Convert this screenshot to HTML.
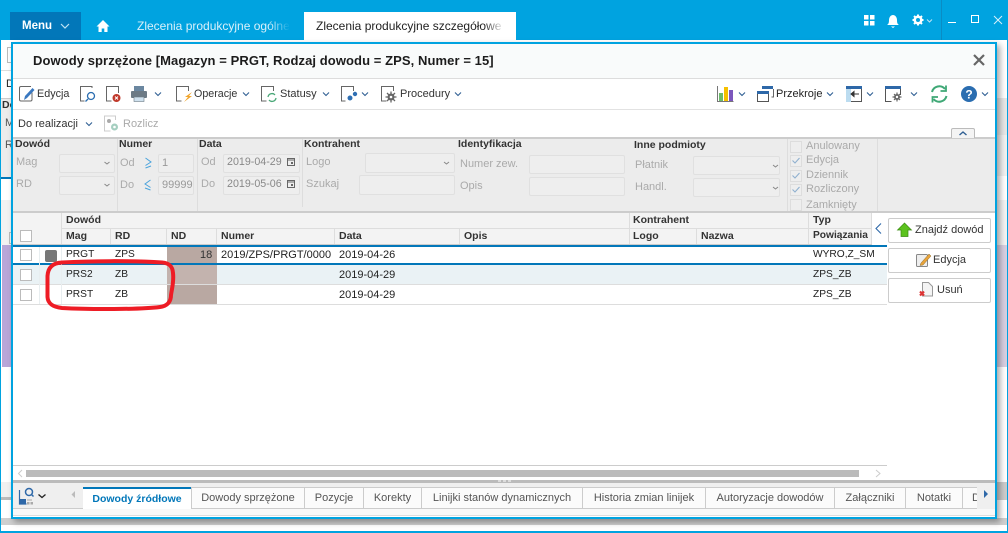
<!DOCTYPE html>
<html><head><meta charset="utf-8">
<style>
html,body{margin:0;padding:0;width:1008px;height:533px;overflow:hidden;background:#fff;font-family:"Liberation Sans",sans-serif;font-size:11px;color:#222}
div,span.a{position:absolute;box-sizing:border-box}
.t{position:absolute;white-space:nowrap;line-height:14px;height:14px}
.b{font-weight:bold;color:#333;font-size:10.5px}
.g{color:#aaa}
.c{font-size:10.2px}
.in{position:absolute;background:#eee;border:1px solid #e0e0e0;border-radius:2px}
.cb{position:absolute;width:12px;height:12px;background:#fff;border:1px solid #bbb}
.cbd{position:absolute;width:12px;height:12px;background:#eee;border:1px solid #ddd}
.btn{position:absolute;left:888px;width:103px;height:25px;background:#fff;border:1px solid #ccc;border-radius:2px}
.tab{position:absolute;top:487px;height:22px;background:#fbfbfb;border:1px solid #ccc;border-bottom:1px solid #ccc;color:#555;line-height:20px;text-align:center;white-space:nowrap;overflow:hidden}
svg{position:absolute;left:0;top:0}
</style></head><body>
<!-- app background -->
<div style="left:0;top:0;width:1008px;height:40px;background:#00a3e0"></div>
<div style="left:10px;top:12px;width:71px;height:28px;background:#0277b9"></div>
<div class="t" style="left:22px;top:19px;color:#fff;font-weight:bold;font-size:11.5px">Menu</div>
<div class="t" style="left:137px;top:19px;color:#d8f0fa;font-size:12px;width:152px;overflow:hidden">Zlecenia produkcyjne ogólne</div>
<div style="left:269px;top:14px;width:21px;height:22px;background:linear-gradient(90deg,rgba(0,163,224,0),#00a3e0)"></div>
<div style="left:304px;top:12px;width:212px;height:28px;background:#fff"></div>
<div class="t" style="left:316px;top:19px;color:#222;font-size:12px;width:188px;overflow:hidden">Zlecenia produkcyjne szczegółowe</div>
<div style="left:484px;top:14px;width:20px;height:22px;background:linear-gradient(90deg,rgba(255,255,255,0),#fff)"></div>
<div style="left:941px;top:0;width:1px;height:40px;background:#0a8cc4"></div>
<!-- background behind modal -->
<div style="left:0;top:40px;width:1008px;height:493px;background:#fff;border-left:1px solid #00a3e0;border-right:1px solid #00a3e0;border-bottom:2px solid #00a3e0"></div>
<div style="left:7px;top:47px;width:5px;height:16px;border:1px solid #bbb;border-right:0"></div>
<div style="left:1px;top:70px;width:11px;height:1px;background:#ddd"></div>
<div style="left:1px;top:98px;width:11px;height:79px;background:#ececec;border-top:1px solid #ccc"></div>
<div class="t" style="left:6px;top:77px;width:6px;overflow:hidden">D</div>
<div class="t b" style="left:2px;top:98px;width:10px;overflow:hidden">De</div>
<div class="t" style="left:5px;top:116px;color:#555;width:7px;overflow:hidden">M</div>
<div class="t" style="left:5px;top:138px;color:#555;width:7px;overflow:hidden">R</div>
<div style="left:1px;top:177px;width:11px;height:2px;background:#0277b9"></div>
<div style="left:1px;top:200px;width:11px;height:45px;background:#f2f2f2"></div>
<div style="left:9px;top:232px;width:3px;height:12px;border:1px solid #bbb;border-right:0"></div>
<div style="left:2px;top:245px;width:10px;height:122px;background:#b8a6d8"></div>
<div style="left:1px;top:482px;width:11px;height:15px;background:#f0f0f0"></div>
<div style="left:1px;top:497px;width:11px;height:3px;background:#bbb"></div>
<div style="left:997px;top:245px;width:10px;height:122px;background:#d8cfe2"></div>
<div style="left:997px;top:98px;width:10px;height:37px;background:#e8e8e8"></div>
<div style="left:997px;top:135px;width:10px;height:41px;background:#f2f2f2"></div>
<div style="left:997px;top:200px;width:10px;height:45px;background:#f4f4f4"></div>
<div style="left:997px;top:482px;width:10px;height:18px;background:#ccc"></div>
<div style="left:1px;top:518px;width:1006px;height:7px;background:#cfcfcf"></div>
<!-- modal -->
<div style="left:11px;top:42px;width:986px;height:477px;background:#fff;border:2px solid #00a3e0;box-shadow:3px 3px 6px rgba(0,0,0,.35)"></div>
<div style="left:13px;top:44px;width:982px;height:35px;background:#f9fbfb;border-bottom:1px solid #ddd"></div>
<div class="t" style="left:33px;top:54px;font-weight:bold;font-size:13px;color:#1c1c1c;letter-spacing:.08px">Dowody sprzężone [Magazyn = PRGT, Rodzaj dowodu = ZPS, Numer = 15]</div>
<div style="left:13px;top:109px;width:982px;height:1px;background:#e2e2e2"></div>
<!-- toolbar -->
<div class="t" style="left:37px;top:87px;color:#333;font-size:10.8px">Edycja</div>
<div class="t" style="left:194px;top:87px;color:#333;font-size:10.7px">Operacje</div>
<div class="t" style="left:280px;top:87px;color:#333">Statusy</div>
<div class="t" style="left:400px;top:87px;color:#333">Procedury</div>
<div class="t" style="left:776px;top:87px;color:#222">Przekroje</div>
<div class="t" style="left:18px;top:117px;color:#333">Do realizacji</div>
<div class="t" style="left:123px;top:117px;color:#aaa">Rozlicz</div>
<!-- filter panel -->
<div style="left:13px;top:137px;width:982px;height:76px;background:#ececec;border-top:2px solid #ccc;border-bottom:2px solid #ccc"></div>
<div style="left:951px;top:128px;width:24px;height:10px;background:#f4f4f4;border:1px solid #bbb;border-bottom:0;border-radius:2px 2px 0 0"></div>
<div style="left:117px;top:139px;width:1px;height:72px;background:#ddd"></div>
<div style="left:197px;top:139px;width:1px;height:72px;background:#ddd"></div>
<div style="left:302px;top:139px;width:1px;height:68px;background:#ddd"></div>
<div style="left:787px;top:139px;width:1px;height:72px;background:#ddd"></div>
<div style="left:877px;top:139px;width:1px;height:72px;background:#ddd"></div>
<div class="t b" style="left:15px;top:137px">Dowód</div>
<div class="t b" style="left:119px;top:137px">Numer</div>
<div class="t b" style="left:199px;top:137px">Data</div>
<div class="t b" style="left:304px;top:137px">Kontrahent</div>
<div class="t b" style="left:458px;top:137px">Identyfikacja</div>
<div class="t b" style="left:634px;top:138px">Inne podmioty</div>
<div class="t g" style="left:16px;top:155px">Mag</div>
<div class="t g" style="left:16px;top:177px">RD</div>
<div class="in" style="left:59px;top:154px;width:56px;height:19px"></div>
<div class="in" style="left:59px;top:176px;width:56px;height:19px"></div>
<div class="t g" style="left:120px;top:156px">Od</div>
<div class="t g" style="left:120px;top:178px">Do</div>
<div class="in" style="left:158px;top:154px;width:36px;height:19px"></div>
<div class="in" style="left:158px;top:176px;width:36px;height:19px"></div>
<div class="t g" style="left:162px;top:156px;color:#999">1</div>
<div class="t g" style="left:162px;top:178px;color:#999;width:31px;overflow:hidden">99999</div>
<div class="t g" style="left:201px;top:155px">Od</div>
<div class="t g" style="left:201px;top:177px">Do</div>
<div class="in" style="left:223px;top:154px;width:77px;height:19px"></div>
<div class="in" style="left:223px;top:176px;width:77px;height:19px"></div>
<div class="t" style="left:227px;top:155px;color:#888;font-size:10.7px">2019-04-29</div>
<div class="t" style="left:227px;top:177px;color:#888;font-size:10.7px">2019-05-06</div>
<div class="t g" style="left:306px;top:155px">Logo</div>
<div class="t g" style="left:306px;top:177px">Szukaj</div>
<div class="in" style="left:365px;top:153px;width:90px;height:20px"></div>
<div class="in" style="left:359px;top:175px;width:96px;height:20px"></div>
<div class="t g" style="left:460px;top:157px">Numer zew.</div>
<div class="t g" style="left:460px;top:179px">Opis</div>
<div class="in" style="left:529px;top:155px;width:96px;height:19px"></div>
<div class="in" style="left:529px;top:177px;width:96px;height:19px"></div>
<div class="t g" style="left:635px;top:158px">Płatnik</div>
<div class="t g" style="left:635px;top:180px">Handl.</div>
<div class="in" style="left:693px;top:156px;width:87px;height:19px"></div>
<div class="in" style="left:693px;top:178px;width:87px;height:19px"></div>
<div class="cbd" style="left:790px;top:141px"></div>
<div class="cbd" style="left:790px;top:155px"></div>
<div class="cbd" style="left:790px;top:170px"></div>
<div class="cbd" style="left:790px;top:184px"></div>
<div class="cbd" style="left:790px;top:199px"></div>
<div class="t g" style="left:806px;top:139px">Anulowany</div>
<div class="t g" style="left:806px;top:153px">Edycja</div>
<div class="t g" style="left:806px;top:168px">Dziennik</div>
<div class="t g" style="left:806px;top:182px">Rozliczony</div>
<div class="t g" style="left:806px;top:198px">Zamknięty</div>
<!-- grid header -->
<div style="left:13px;top:213px;width:859px;height:31px;background:#f3f3f3"></div>
<div style="left:61px;top:228px;width:811px;height:1px;background:#ddd"></div>
<div style="left:13px;top:244px;width:859px;height:1px;background:#ccc"></div>
<div style="left:61px;top:213px;width:1px;height:31px;background:#ddd"></div>
<div style="left:110px;top:229px;width:1px;height:15px;background:#ddd"></div>
<div style="left:166px;top:229px;width:1px;height:15px;background:#ddd"></div>
<div style="left:216px;top:229px;width:1px;height:15px;background:#ddd"></div>
<div style="left:334px;top:229px;width:1px;height:15px;background:#ddd"></div>
<div style="left:459px;top:229px;width:1px;height:15px;background:#ddd"></div>
<div style="left:629px;top:213px;width:1px;height:31px;background:#ddd"></div>
<div style="left:696px;top:229px;width:1px;height:15px;background:#ddd"></div>
<div style="left:808px;top:213px;width:1px;height:31px;background:#ddd"></div>
<div style="left:871px;top:213px;width:1px;height:31px;background:#ddd"></div>
<div class="t b" style="left:66px;top:213px">Dowód</div>
<div class="t b" style="left:633px;top:213px">Kontrahent</div>
<div class="t b" style="left:813px;top:213px">Typ</div>
<div class="t b" style="left:66px;top:229px">Mag</div>
<div class="t b" style="left:115px;top:229px">RD</div>
<div class="t b" style="left:171px;top:229px">ND</div>
<div class="t b" style="left:221px;top:229px">Numer</div>
<div class="t b" style="left:339px;top:229px">Data</div>
<div class="t b" style="left:464px;top:229px">Opis</div>
<div class="t b" style="left:633px;top:229px">Logo</div>
<div class="t b" style="left:701px;top:229px">Nazwa</div>
<div class="t b" style="left:813px;top:229px;font-size:10.2px">Powiązania</div>
<div class="cb" style="left:20px;top:230px"></div>
<!-- grid rows -->
<div style="left:13px;top:264px;width:874px;height:21px;background:#eaf2f5;border-bottom:1px solid #ddd"></div>
<div style="left:13px;top:285px;width:874px;height:20px;background:#fff;border-bottom:1px solid #ddd"></div>
<div style="left:167px;top:246px;width:50px;height:17px;background:#b9a8a2"></div>
<div style="left:167px;top:265px;width:50px;height:19px;background:#c3b3ae"></div>
<div style="left:167px;top:285px;width:50px;height:19px;background:#b9a8a2"></div>
<div style="left:13px;top:245px;width:874px;height:2px;background:#0277b9"></div>
<div style="left:13px;top:263px;width:874px;height:2px;background:#0277b9"></div>
<div style="left:39px;top:247px;width:1px;height:57px;background:#e8eef0"></div>
<div style="left:61px;top:247px;width:1px;height:57px;background:#e8eef0"></div>
<div class="cb" style="left:20px;top:249px"></div>
<div class="cb" style="left:20px;top:269px"></div>
<div class="cb" style="left:20px;top:289px"></div>
<div style="left:45px;top:250px;width:12px;height:12px;background:#777;border-radius:2px"></div>
<div class="t c" style="left:66px;top:248px">PRGT</div>
<div class="t c" style="left:115px;top:248px">ZPS</div>
<div class="t" style="left:200px;top:248px;color:#333">18</div>
<div class="t" style="left:221px;top:248px;width:111px;overflow:hidden">2019/ZPS/PRGT/0000</div>
<div class="t" style="left:339px;top:248px">2019-04-26</div>
<div class="t c" style="left:813px;top:248px;width:73px;overflow:hidden">WYRO,Z_SM</div>
<div class="t c" style="left:66px;top:268px">PRS2</div>
<div class="t c" style="left:115px;top:268px">ZB</div>
<div class="t" style="left:339px;top:268px">2019-04-29</div>
<div class="t c" style="left:813px;top:268px">ZPS_ZB</div>
<div class="t c" style="left:66px;top:288px">PRST</div>
<div class="t c" style="left:115px;top:288px">ZB</div>
<div class="t" style="left:339px;top:288px">2019-04-29</div>
<div class="t c" style="left:813px;top:288px">ZPS_ZB</div>
<!-- side buttons -->
<div style="left:887px;top:213px;width:108px;height:252px;background:#fff"></div>
<div class="btn" style="top:218px"></div>
<div class="btn" style="top:248px"></div>
<div class="btn" style="top:278px"></div>
<div class="t" style="left:915px;top:223px;color:#333">Znajdź dowód</div>
<div class="t" style="left:933px;top:253px;color:#333">Edycja</div>
<div class="t" style="left:937px;top:283px;color:#333">Usuń</div>
<!-- scrollbar & tabs -->
<div style="left:13px;top:465px;width:874px;height:1px;background:#ccc"></div>
<div style="left:26px;top:470px;width:833px;height:7px;background:#bbb"></div>
<div style="left:13px;top:480px;width:982px;height:3px;background:#bbb"></div>
<div style="left:13px;top:483px;width:982px;height:26px;background:#efefef"></div>
<div style="left:13px;top:509px;width:982px;height:7px;background:#f8f8f8"></div>
<div style="left:13px;top:515px;width:982px;height:1px;background:#ddd"></div>
<div style="left:13px;top:508px;width:982px;height:1px;background:#ccc"></div>
<div class="tab" style="left:83px;top:487px;width:109px;height:22px;border:0;border-top:2px solid #0277b9;border-right:1px solid #ccc;background:#fff;color:#0277b9;font-weight:bold;line-height:21px;font-size:10.5px">Dowody źródłowe</div>
<div class="tab" style="left:191px;width:114px">Dowody sprzężone</div>
<div class="tab" style="left:304px;width:60px">Pozycje</div>
<div class="tab" style="left:363px;width:59px">Korekty</div>
<div class="tab" style="left:421px;width:162px">Linijki stanów dynamicznych</div>
<div class="tab" style="left:582px;width:124px">Historia zmian linijek</div>
<div class="tab" style="left:705px;width:130px">Autoryzacje dowodów</div>
<div class="tab" style="left:834px;width:72px">Załączniki</div>
<div class="tab" style="left:905px;width:58px">Notatki</div>
<div class="tab" style="left:962px;width:15px;text-align:left;padding-left:9px;border-right:0">D</div>
<div style="left:977px;top:484px;width:18px;height:25px;background:#efefef"></div>
<!-- icons -->
<svg width="1008" height="533" viewBox="0 0 1008 533" fill="none">
<!-- top bar -->
<path d="M61 24l4 4 4-4" stroke="#bfe3f5" stroke-width="1.200"/>
<path d="M103 20l-6.500 6.500h2v5.500h3.200v-3.500h2.600v3.500h3.200v-5.500h2z" fill="#fff"/>
<path d="M864 15h4.500v4.500h-4.500zM870 15h4.500v4.500h-4.500zM864 21h4.500v4.500h-4.500zM870 21h4.500v4.500h-4.500z" fill="#fff"/>
<path d="M887 25c1.500-1 2-2 2-5 0-3 2-5 4-5s4 2 4 5c0 3 .5 4 2 5zM891 26.500h4l-2 1.500z" fill="#fff"/>
<path d="M918 14.500v11M912.500 20h11M914 16l8 8M922 16l-8 8" stroke="#fff" stroke-width="2"/>
<circle cx="918" cy="20" r="4.500" fill="#fff"/>
<circle cx="918" cy="20" r="2" fill="#00a3e0"/>
<path d="M927 19.500l2.500 2.500 2.500-2.500" stroke="#bfe3f5"/>
<path d="M948 22.500h8" stroke="#fff"/>
<rect x="971.500" y="15.500" width="7" height="7" stroke="#fff"/>
<path d="M994 16l8 8M1002 16l-8 8" stroke="#d8f0fa"/>
<!-- close -->
<path d="M974 55l10 10M984 55l-10 10" stroke="#666" stroke-width="2.200"/>
<!-- toolbar left -->
<path d="M31 86.500h-10a1.500 1.500 0 0 0-1.500 1.500v11.500a1.500 1.500 0 0 0 1.500 1.500h9.500a1.500 1.500 0 0 0 1.500-1.500v-7" stroke="#666"/>
<path d="M24 100l1-4 7.500-8 2 2-7.500 8z" fill="#3a78c0"/>
<path d="M92 88v-1.500h-11.500v14.500h4" stroke="#666"/>
<circle cx="91" cy="96" r="3.500" stroke="#2a6db0" stroke-width="1.300"/><path d="M88 99l-2.500 2.500" stroke="#2a6db0" stroke-width="1.300"/>
<path d="M118.500 93v-6.500h-12v14.500h5" stroke="#666"/>
<circle cx="116.500" cy="98" r="4" fill="#c0392b"/><path d="M115 96.500l3 3M118 96.500l-3 3" stroke="#fff"/>
<rect x="134" y="86" width="10" height="5" fill="#6b87a0"/>
<rect x="131" y="91" width="16" height="7" rx="1" fill="#6c7a85"/>
<rect x="134" y="97" width="10" height="4.500" fill="#cfe1ee" stroke="#6c7a85" stroke-width=".6"/>
<path d="M155 92.500l3 3 3-3M243 92.500l3 3 3-3M323 92.500l3 3 3-3M362 92.500l3 3 3-3M455 92.500l3 3 3-3M86 122.500l3 3 3-3" stroke="#2f5f93" stroke-width="1.100"/>
<path d="M188.500 91v-4.500h-12v14.500h5" stroke="#666"/><path d="M192 92l-7 5h3l-4 5 8-6h-3l3-4z" fill="#f2a52c"/>
<path d="M273.500 91v-4.500h-12v14.500h5" stroke="#666"/><path d="M268 97a4 4 0 0 1 7-2M276 98a4 4 0 0 1-7 2" stroke="#4aa878" stroke-width="1.300"/>
<path d="M353.500 91v-4.500h-12v14.500h4" stroke="#666"/><circle cx="350" cy="98" r="2.500" fill="#2f6fb3"/><circle cx="355" cy="94" r="2.200" fill="#2f6fb3"/>
<path d="M393.500 91v-4.500h-12v14.500h5" stroke="#666"/><path d="M391 91.500v11M385.500 97h11M387 93l8 8M395 93l-8 8" stroke="#666" stroke-width="1.300"/><circle cx="391" cy="97" r="3.500" fill="#666"/><circle cx="391" cy="97" r="1.300" fill="#fff"/>
<!-- second toolbar icon -->
<path d="M115.500 120v-4h-11v15h6" stroke="#ccc"/><circle cx="109" cy="121" r="2" fill="#aaa"/><circle cx="114.500" cy="127" r="3.500" fill="#a5cfc0"/><circle cx="114.500" cy="127" r="1.300" fill="#fff"/>
<!-- toolbar right -->
<path d="M717.500 86v15.500h16" stroke="#777"/>
<rect x="719" y="93" width="4" height="8" fill="#6cbb6c"/><rect x="724" y="87" width="4" height="14" fill="#f5c000"/><rect x="729" y="90" width="4" height="11" fill="#7c57bd"/>
<path d="M739 92.500l3 3 3-3M827 92.500l3 3 3-3M867 92.500l3 3 3-3M911 92.500l3 3 3-3M982 92.500l3 3 3-3" stroke="#2f5f93" stroke-width="1.100"/>
<rect x="762" y="86" width="11" height="3" fill="#2e68a8"/><path d="M773.500 89v8h-2" stroke="#666"/>
<rect x="757.500" y="91.500" width="11" height="10" stroke="#555" fill="#fff"/><rect x="757" y="91" width="12" height="3" fill="#2e68a8"/>
<rect x="846.500" y="86.500" width="15" height="15" fill="#fff" stroke="#555"/><rect x="846" y="87" width="5" height="15" fill="#bcdcf0"/><rect x="846" y="86" width="16" height="3" fill="#2e68a8"/>
<path d="M851 94h8" stroke="#333"/><path d="M854 91.500l-3 2.500 3 2.500z" stroke="#333" fill="#333"/>
<path d="M885.500 89v12.500h6M900.500 89v6" stroke="#555"/><rect x="885" y="86" width="16" height="3" fill="#2e68a8"/>
<path d="M897 92.500v9M892.500 97h9M894 94l6 6M900 94l-6 6" stroke="#666" stroke-width="1.200"/><circle cx="897" cy="97" r="3" fill="#666"/><circle cx="897" cy="97" r="1.200" fill="#fff"/>
<path d="M932 92a7.500 7.500 0 0 1 13-3M946.500 96a7.500 7.500 0 0 1-13 3" stroke="#3fa876" stroke-width="2"/>
<path d="M946 85.500v5.500h-5.500M932.500 102.500v-5.500h5.500" stroke="#3fa876" stroke-width="1.800"/>
<circle cx="969" cy="94" r="8" fill="#2a6db0"/>
<text x="969" y="98.500" text-anchor="middle" font-family="Liberation Sans" font-weight="bold" font-size="12" fill="#fff">?</text>
<path d="M959.500 135l3.500-3 3.500 3" stroke="#2f5f93" stroke-width="1.400"/>
<!-- filter combo arrows etc -->
<path d="M104.500 162l2.500 2 2.500-2M104.500 184l2.500 2 2.500-2M444 162l2.500 2 2.500-2M773 165l2.500 2 2.500-2M773 187l2.500 2 2.500-2" stroke="#888"/>
<path d="M145.500 158l5.500 4-5.500 3.500M145.500 168l5.500-2" stroke="#4aa3dc" stroke-width="1"/>
<path d="M150.500 180l-5.500 4 5.500 3.500M150.500 190l-5.500-2" stroke="#4aa3dc" stroke-width="1"/>
<rect x="287.500" y="158.500" width="7" height="7" stroke="#666"/><path d="M287 160h8" stroke="#666"/><rect x="291" y="162" width="2" height="2" fill="#666"/>
<rect x="287.500" y="180.500" width="7" height="7" stroke="#666"/><path d="M287 182h8" stroke="#666"/><rect x="291" y="184" width="2" height="2" fill="#666"/>
<path d="M792.500 160.500l2.500 2.500 4.500-5M792.500 175.500l2.500 2.500 4.500-5M792.500 189.500l2.500 2.500 4.500-5" stroke="#8fb0cf" stroke-width="1.100"/>
<!-- grid side arrow -->
<path d="M881 223.500l-5 5 5 5" stroke="#2e68a8" stroke-width="1.100"/>
<!-- button icons -->
<path d="M904.500 223l-7 7h3.500v6.500h7v-6.500h3.500z" fill="#5cc21e" stroke="#3a8a12" stroke-width=".7"/>
<rect x="916.500" y="254.500" width="11" height="12" rx="1" fill="#eee" stroke="#888"/><path d="M921 263l8-9 2 2-8 9-3 .5z" fill="#e8a33a" stroke="#8a6a30" stroke-width=".5"/>
<path d="M922.500 282.500h6l4 4v9.500h-10z" fill="#f4f4f4" stroke="#999"/><path d="M920 291.500l4 4M924 291.500l-4 4" stroke="#d33" stroke-width="2.200"/>
<!-- red annotation -->
<path d="M62 262.500C52 263 48 268 47.500 276L47.500 297C48 304 53 307 62 308C90 309.500 140 309.500 160 307C168 306 171 301 171 295C172 288 174 282 173 273C172.500 266 169 263 162 262.500C130 260.500 90 261 62 262.500z" stroke="#ee1c25" stroke-width="4"/>
<!-- scroll arrows -->
<path d="M22 470l-3.500 3.500 3.500 3.500" stroke="#ccc"/><path d="M876 470l4 3.500-4 3.500" stroke="#ccc"/>
<path d="M498 481h3M503 481h3M508 481h3" stroke="#fff"/>
<!-- bottom left icon -->
<path d="M19.500 490v14h7" stroke="#2e68a8" stroke-width="1.200"/><rect x="19" y="499" width="7" height="5.500" fill="#2e68a8"/>
<rect x="27" y="502" width="2.500" height="2.500" fill="#aaa"/><rect x="30.500" y="502" width="2.500" height="2.500" fill="#aaa"/><rect x="27" y="499" width="5" height="2" fill="#ccc"/>
<circle cx="29" cy="492" r="3.500" stroke="#2e68a8" stroke-width="1.500"/><path d="M31.500 494.500l2 2" stroke="#2e68a8" stroke-width="1.500"/>
<path d="M38.500 494.500l3.500 3 3.500-3" stroke="#222" stroke-width="1.300"/>
<path d="M75 491v7l-3.500-3.500z" fill="#bbb"/>
<path d="M984 490v8l4-4z" fill="#2e68a8"/>
</svg>
</body></html>
